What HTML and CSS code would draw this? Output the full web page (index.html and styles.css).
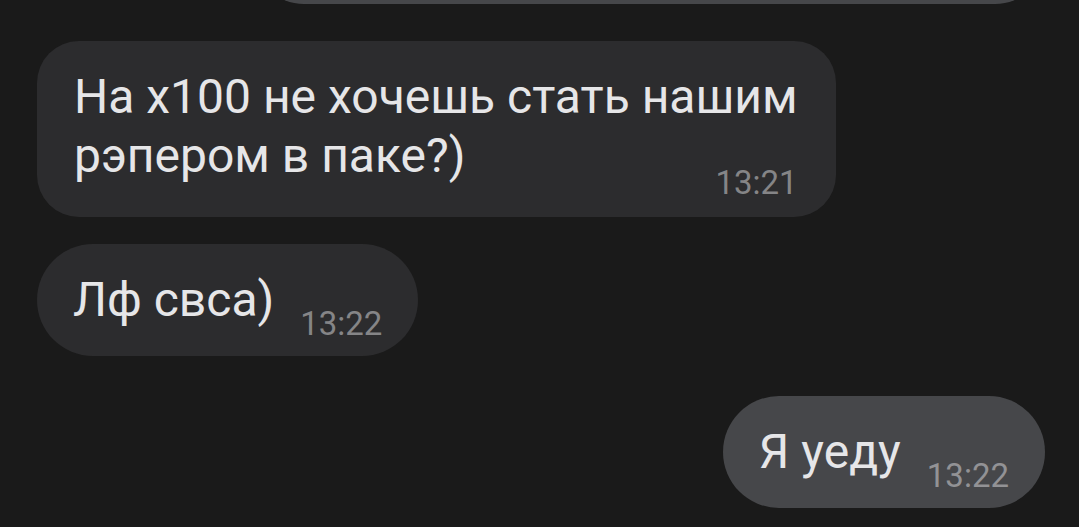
FILE: index.html
```html
<!DOCTYPE html>
<html>
<head>
	<title>Chat</title>
<link rel="stylesheet" href="styles.css">
</head>
<body>
	<div class="chat">
		<div class="msg out cut">
			<div class="bubble"></div>
		</div>

		<div class="msg in first">
			<div class="bubble">
				<div class="line">На x100 не хочешь стать нашим</div>
				<div class="row">
					<span class="text last">рэпером в паке?)</span>
					<span class="time">13:21</span>
				</div>
			</div>
		</div>

		<div class="msg in">
			<div class="bubble">
				<div class="row">
					<span class="text">Лф свса)</span>
					<span class="time">13:22</span>
				</div>
			</div>
		</div>

		<div class="msg out">
			<div class="bubble">
				<div class="row">
					<span class="text">Я уеду</span>
					<span class="time">13:22</span>
				</div>
			</div>
		</div>
	</div>
</body>
</html>
```

FILE: styles.css
```css
html, body {
  margin: 0;
  height: 100%;
  background-color: #1a1a1a;
  overflow: hidden;
}

.chat {
  display: flex;
  flex-direction: column;
  padding: 0 34px 0 37px;
  font-family: Roboto, "Noto Sans", sans-serif;
}

.msg {
  display: flex;
}

.msg.in {
  justify-content: flex-start;
  margin-top: 27px;
}

.msg.out {
  justify-content: flex-end;
  margin-top: 40px;
}

.msg.first {
  margin-top: 37px;
}

/* tail end of the previous message, scrolled off the top */
.msg.cut {
  margin-top: -96px;
}

.msg.cut .bubble {
  width: 791px;
  height: 100px;
  padding: 0;
}

.bubble {
  border-radius: 56px;
  padding: 26px 36px 16px 36px;
  color: #e6e6e8;
}

.msg.first .bubble {
  border-radius: 42px;
  padding-right: 38px;
  padding-left: 37px;
  padding-bottom: 18px;
}

.in .bubble {
  background-color: #2c2c2e;
}

.out .bubble {
  background-color: #46474a;
}

.line,
.text {
  font-size: 48px;
  line-height: 59px;
  white-space: nowrap;
}

.row {
  display: flex;
  align-items: flex-end;
  justify-content: space-between;
}

.text {
  padding-bottom: 11px;
}

.text.last {
  padding-bottom: 14px;
}

.time {
  margin-left: 26px;
  font-size: 33px;
  line-height: 32px;
  color: #858587;
  white-space: nowrap;
}

.out .time {
  color: #929295;
}
```
